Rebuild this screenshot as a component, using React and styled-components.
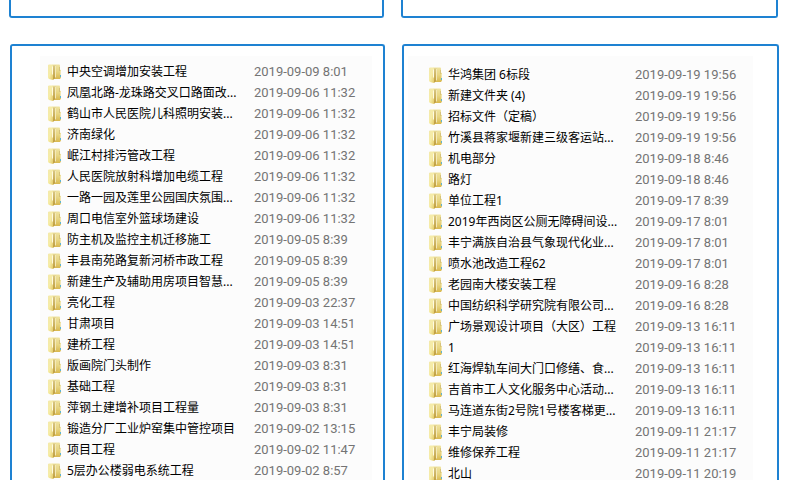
import React from "react";
import styled, { createGlobalStyle } from "styled-components";

const GlobalStyle = createGlobalStyle`
  * {
    box-sizing: border-box;
  }
  body {
    margin: 0;
    background: #fff;
    overflow: hidden;
  }
`;

const Page = styled.main`
  display: flex;
  flex-direction: column;
  gap: 26px;
  height: 100vh;
  font-family: "Noto Sans", "Noto Sans CJK SC", sans-serif;
  font-size: 12px;
`;

const CardRow = styled.section`
  display: grid;
  grid-template-columns: 375fr 377fr;
  gap: 17px;
  padding: 0 ${(props) => props.$right}px 0 ${(props) => props.$left}px;
  flex: ${(props) => (props.$grow ? "1" : "none")};
  min-height: 0;
`;

const Card = styled.div`
  min-width: 0;
  min-height: 18px;
  border: 2px solid #1e82d2;
  border-radius: 3px;
`;

const TopCard = styled(Card)`
  border-top: none;
  border-top-left-radius: 0;
  border-top-right-radius: 0;
`;

const ListCard = styled(Card)`
  border-bottom: none;
  border-bottom-left-radius: 0;
  border-bottom-right-radius: 0;
  padding: 10px ${(props) => props.$right}px 0 ${(props) => props.$left}px;
  overflow: hidden;
`;

const Sheet = styled.div`
  padding: ${(props) => props.$top}px 0 0 ${(props) => props.$left}px;
  background: #fcfcfc;
`;

const FileTable = styled.table`
  width: 100%;
  border-collapse: collapse;
  table-layout: fixed;
`;

const FileRow = styled.tr`
  height: 21px;
`;

const Cell = styled.td`
  padding: 0;
  height: 21px;
  line-height: 20px;
  white-space: nowrap;
  vertical-align: middle;
`;

const NameCell = styled(Cell)`
  width: 206px;
  color: #000;
`;

const DateCell = styled(Cell)`
  color: #747474;
  font-family: Roboto, sans-serif;
  font-size: 13px;
`;

const FileName = styled.span`
  display: flex;
  align-items: center;
  gap: 6px;
`;

const Icon = styled.svg`
  flex: none;
  width: 13px;
  height: 16px;
`;

function FolderIcon() {
  return (
    <Icon viewBox="0 0 13 16" aria-hidden="true">
      <defs>
        <linearGradient id="flap" x1="0" y1="0" x2="1" y2="1">
          <stop offset="0" stopColor="#f3e9ac" />
          <stop offset="0.5" stopColor="#f6eca6" />
          <stop offset="1" stopColor="#e2c965" />
        </linearGradient>
        <linearGradient id="back" x1="0" y1="0" x2="0" y2="1">
          <stop offset="0" stopColor="#efe3a0" />
          <stop offset="0.5" stopColor="#e8d683" />
          <stop offset="1" stopColor="#d8b84e" />
        </linearGradient>
        <linearGradient id="slot" x1="0" y1="0" x2="0" y2="1">
          <stop offset="0" stopColor="#d9c784" />
          <stop offset="1" stopColor="#bd9a3a" />
        </linearGradient>
      </defs>
      <path d="M4 0.5h7.5l.5 1v4l1 1v7l-1 1.5H5z" fill="url(#back)" />
      <path d="M5 1.5h2.5v12L5 16z" fill="url(#slot)" />
      <path d="M0 1l1-.5h3l1 1.5v14L1 15l-1-1z" fill="url(#flap)" />
      <path d="M4 2.5h1v8H4z" fill="#fffbe2" />
      <path d="M7 2h1v11.5H7z" fill="#f4eab8" />
      <path d="M11 3h1v4h-1z" fill="#d6c27a" />
      <path d="M12 7h1v4h-1z" fill="#f0e5b0" />
      <path d="M12 11h1v2h-1z" fill="#5fb3d0" />
    </Icon>
  );
}

const leftFiles = [
  ["中央空调增加安装工程", "2019-09-09 8:01"],
  ["凤凰北路-龙珠路交叉口路面改...", "2019-09-06 11:32"],
  ["鹤山市人民医院儿科照明安装...", "2019-09-06 11:32"],
  ["济南绿化", "2019-09-06 11:32"],
  ["岷江村排污管改工程", "2019-09-06 11:32"],
  ["人民医院放射科增加电缆工程", "2019-09-06 11:32"],
  ["一路一园及莲里公园国庆氛围...", "2019-09-06 11:32"],
  ["周口电信室外篮球场建设", "2019-09-06 11:32"],
  ["防主机及监控主机迁移施工", "2019-09-05 8:39"],
  ["丰县南苑路复新河桥市政工程", "2019-09-05 8:39"],
  ["新建生产及辅助用房项目智慧...", "2019-09-05 8:39"],
  ["亮化工程", "2019-09-03 22:37"],
  ["甘肃项目", "2019-09-03 14:51"],
  ["建桥工程", "2019-09-03 14:51"],
  ["版画院门头制作", "2019-09-03 8:31"],
  ["基础工程", "2019-09-03 8:31"],
  ["萍钢土建增补项目工程量", "2019-09-03 8:31"],
  ["锻造分厂工业炉窑集中管控项目", "2019-09-02 13:15"],
  ["项目工程", "2019-09-02 11:47"],
  ["5层办公楼弱电系统工程", "2019-09-02 8:57"],
];

const rightFiles = [
  ["华鸿集团 6标段", "2019-09-19 19:56"],
  ["新建文件夹 (4)", "2019-09-19 19:56"],
  ["招标文件（定稿）", "2019-09-19 19:56"],
  ["竹溪县蒋家堰新建三级客运站...", "2019-09-19 19:56"],
  ["机电部分", "2019-09-18 8:46"],
  ["路灯", "2019-09-18 8:46"],
  ["单位工程1", "2019-09-17 8:39"],
  ["2019年西岗区公厕无障碍间设...", "2019-09-17 8:01"],
  ["丰宁满族自治县气象现代化业...", "2019-09-17 8:01"],
  ["喷水池改造工程62", "2019-09-17 8:01"],
  ["老园南大楼安装工程", "2019-09-16 8:28"],
  ["中国纺织科学研究院有限公司...", "2019-09-16 8:28"],
  ["广场景观设计项目（大区）工程", "2019-09-13 16:11"],
  ["1", "2019-09-13 16:11"],
  ["红海焊轨车间大门口修缮、食...", "2019-09-13 16:11"],
  ["吉首市工人文化服务中心活动...", "2019-09-13 16:11"],
  ["马连道东街2号院1号楼客梯更...", "2019-09-13 16:11"],
  ["丰宁局装修", "2019-09-11 21:17"],
  ["维修保养工程", "2019-09-11 21:17"],
  ["北山", "2019-09-11 20:19"],
];

function FileList({ files }) {
  return (
    <FileTable>
      <tbody>
        {files.map(([name, date]) => (
          <FileRow key={name}>
            <NameCell>
              <FileName>
                <FolderIcon />
                {name}
              </FileName>
            </NameCell>
            <DateCell>{date}</DateCell>
          </FileRow>
        ))}
      </tbody>
    </FileTable>
  );
}

export default function App() {
  return (
    <>
      <GlobalStyle />
      <Page>
        <CardRow $left={9} $right={12}>
          <TopCard />
          <TopCard />
        </CardRow>
        <CardRow $left={10} $right={11} $grow>
          <ListCard $left={28} $right={11}>
            <Sheet $top={5} $left={8}>
              <FileList files={leftFiles} />
            </Sheet>
          </ListCard>
          <ListCard $left={4} $right={24}>
            <Sheet $top={8} $left={21}>
              <FileList files={rightFiles} />
            </Sheet>
          </ListCard>
        </CardRow>
      </Page>
    </>
  );
}
